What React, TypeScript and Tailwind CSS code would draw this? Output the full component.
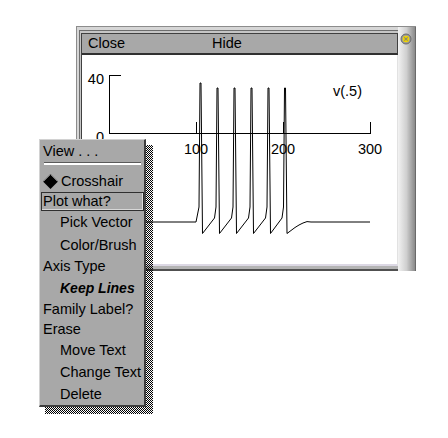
import React from "react";

function buildTrace(): string {
  const spikes = [200, 217, 234, 251, 268, 284.5];
  let d = "M109,222 L196,222 L199,207";
  spikes.forEach((x, i) => {
    const top = i === 0 ? 83 : 88;
    if (i > 0) d += ` L${x - 2.5},218 L${x - 1},207`;
    d += ` L${x},${top} L${x + 1},${top} L${x + 2.5},233.5`;
  });
  d += " L291,230.5 L295,227.5 L299,225 L303,223 L307,221.6 L311,222 L370,222";
  return d;
}

function Plot() {
  return (
    <svg
      width="315"
      height="209"
      viewBox="82 55 315 209"
      className="block"
      style={{ fontFamily: "'Liberation Sans', Arial, sans-serif" }}
    >
      <g stroke="#000" strokeWidth="1" shapeRendering="crispEdges" fill="none">
        <line x1="109.5" y1="75" x2="109.5" y2="134" />
        <line x1="109" y1="75.5" x2="121" y2="75.5" />
        <line x1="109" y1="133.5" x2="371" y2="133.5" />
        <line x1="196.5" y1="122" x2="196.5" y2="133" />
        <line x1="283.5" y1="122" x2="283.5" y2="133" />
        <line x1="370.5" y1="122" x2="370.5" y2="134" />
      </g>
      <path d={buildTrace()} fill="none" stroke="#000" strokeWidth="1" />
      <g fontSize="14.5" fill="#000">
        <text x="104" y="83.5" textAnchor="end">40</text>
        <text x="104" y="141.5" textAnchor="end">0</text>
        <text x="196" y="154" textAnchor="middle">100</text>
        <text x="283" y="154" textAnchor="middle">200</text>
        <text x="370" y="154" textAnchor="middle">300</text>
        <text x="333" y="95.5">v(.5)</text>
      </g>
    </svg>
  );
}

function Row({
  h,
  indent,
  children,
  className = "",
}: {
  h: string;
  indent?: boolean;
  children: React.ReactNode;
  className?: string;
}) {
  return (
    <div className={`flex items-center whitespace-nowrap ${indent ? "pl-[20px]" : "pl-[3px]"} ${h} ${className}`}>
      {children}
    </div>
  );
}

export default function App() {
  return (
    <div className="relative w-[448px] h-[438px] overflow-hidden bg-white text-black font-['Liberation_Sans',Arial,sans-serif] text-[14.5px] leading-none">
      <div className="pt-[26px] pl-[76px]">
        {/* window */}
        <div className="flex w-[340px] h-[245px] border-t border-[#8c8c8c]">
          <div className="flex-1 flex flex-col border-l border-[#8c8c8c] bg-[#d6d6d6]">
            <div className="flex-1 flex flex-col mt-[3px] ml-[2px] border-t border-l border-[#6e6e6e] pt-[2px] pl-[1px] bg-[#c6c6c6]">
              <div className="flex-1 flex flex-col border-l border-[#404040]">
                <div className="h-[22px] flex items-center border-t border-r border-[#404040] border-b-2 border-b-[#303030] bg-[#a8a8a8] pl-[6px]">
                  <span className="w-[124px]">Close</span>
                  <span>Hide</span>
                </div>
                <div className="flex-1 bg-white border-r border-r-[#e2e2e2] border-b-2 border-b-[#dcd8e4] overflow-hidden">
                  <Plot />
                </div>
              </div>
            </div>
            <div className="h-[5px] bg-[#b4b4b4] border-b-2 border-[#505050]" />
          </div>
          <div className="w-[18px] bg-linear-to-r from-[#f2f2f2] via-[#cfcfcf] to-[#8a8a8a] border-r border-[#6a6a6a] pt-[6px] pl-[2px]">
            <svg width="12" height="12" viewBox="0 0 12 12" className="block">
              <circle cx="6" cy="6" r="5" fill="#9a9a9a" stroke="#6a6a6a" strokeWidth="1" />
              <circle cx="6" cy="6" r="3.3" fill="#f0d400" />
              <path d="M4.3,4.3 L7.7,7.7 M7.7,4.3 L4.3,7.7" stroke="#8a8a70" strokeWidth="1.1" />
            </svg>
          </div>
        </div>
      </div>

      {/* stippled shadow */}
      <svg
        className="absolute left-[45px] top-[145px]"
        width="108"
        height="269"
        shapeRendering="crispEdges"
      >
        <defs>
          <pattern id="stip" width="2" height="2" patternUnits="userSpaceOnUse">
            <rect x="0" y="0" width="1" height="1" fill="#000" />
            <rect x="1" y="1" width="1" height="1" fill="#000" />
          </pattern>
        </defs>
        <rect x="0" y="0" width="108" height="269" fill="url(#stip)" />
      </svg>

      {/* popup menu */}
      <div className="absolute left-[39px] top-[139px] w-[107px] h-[268px] flex flex-col bg-[#a8a8a8] border-t border-l border-[#d2d2d2] border-r-2 border-b-2 border-r-[#404040] border-b-[#404040]">
        <Row h="h-[22px]">View . . .</Row>
        <div className="h-[8px]">
          <div className="ml-[4px] mr-[3px] h-[3px] border-t border-[#5a5a5a] bg-white" />
        </div>
        <div className="h-[22px] flex items-center whitespace-nowrap pl-[3px]">
          <svg width="15" height="15" viewBox="0 0 15 15" className="block">
            <polygon points="7.5,0 15,7.5 7.5,15 0,7.5" fill="#000" />
            <polyline points="0.5,7.5 7.5,0.5 14.5,7.5" fill="none" stroke="#7a7a7a" strokeWidth="1" />
          </svg>
          <span className="ml-[3px]">Crosshair</span>
        </div>
        <div className="h-[19px] ml-[1px] flex items-center whitespace-nowrap pl-[1px] border border-[#303030] shadow-[inset_-1px_-1px_0_#d8d8d8]">
          Plot what?
        </div>
        <Row h="h-[23px]" indent>Pick Vector</Row>
        <Row h="h-[22px]" indent>Color/Brush</Row>
        <Row h="h-[21px]">Axis Type</Row>
        <Row h="h-[22px]" indent className="font-bold italic text-[14px]">Keep Lines</Row>
        <Row h="h-[21px]">Family Label?</Row>
        <Row h="h-[19px]">Erase</Row>
        <Row h="h-[23px]" indent>Move Text</Row>
        <Row h="h-[21px]" indent>Change Text</Row>
        <Row h="h-[22px]" indent>Delete</Row>
      </div>
    </div>
  );
}
